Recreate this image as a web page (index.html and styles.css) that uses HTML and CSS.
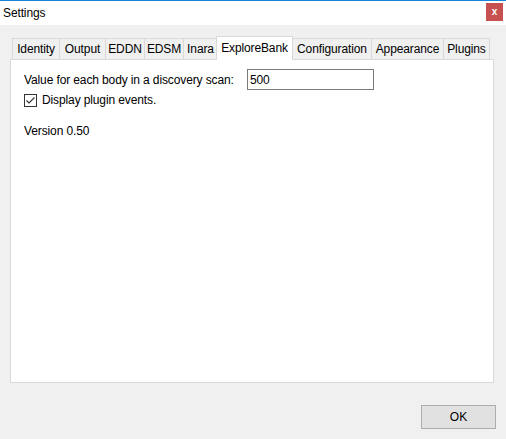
FILE: index.html
```html
<!DOCTYPE html>
<html>
<head>
<meta charset="utf-8">
<title>Settings</title>
<link rel="stylesheet" href="styles.css">
</head>
<body>
<div class="window">
  <div class="titlebar">
    <span class="title">Settings</span>
    <span class="close">x</span>
  </div>
  <div class="client">
    <div class="tabs">
      <div class="tab tab-identity">Identity</div>
      <div class="tab tab-output">Output</div>
      <div class="tab tab-eddn">EDDN</div>
      <div class="tab tab-edsm">EDSM</div>
      <div class="tab tab-inara">Inara</div>
      <div class="tab tab-explore active">ExploreBank</div>
      <div class="tab tab-config">Configuration</div>
      <div class="tab tab-appearance">Appearance</div>
      <div class="tab tab-plugins">Plugins</div>
    </div>
    <div class="panel">
      <div class="row-value">
        <label class="label" for="val">Value for each body in a discovery scan:</label>
        <input id="val" class="textbox" type="text" value="500">
      </div>
      <div class="check-row">
        <span class="checkbox">
          <svg width="11" height="11" viewBox="0 0 11 11"><path d="M1.5 5.5 L4 8 L9.5 2.5" fill="none" stroke="#333" stroke-width="1.1"/></svg>
        </span>
        <span class="check-label">Display plugin events.</span>
      </div>
      <div class="version">Version 0.50</div>
    </div>
    <div class="footer">
      <button class="btn">OK</button>
    </div>
  </div>
</div>
</body>
</html>
```
FILE: styles.css
```css
* { box-sizing: border-box; }
html, body { margin: 0; padding: 0; }
body {
  width: 506px;
  height: 439px;
  overflow: hidden;
  background: #f0f0f0;
  font-family: "Liberation Sans", Arial, sans-serif;
  font-size: 12px;
  letter-spacing: -0.12px;
  color: #000;
}
.window {
  height: 439px;
  border-top: 1px solid #1883d7;
  display: flex;
  flex-direction: column;
}
.titlebar {
  height: 24px;
  background: #fff;
  display: flex;
  justify-content: space-between;
  align-items: flex-start;
  padding-left: 3px;
}
.title { line-height: 24px; }
.close {
  width: 17px;
  height: 18px;
  margin-top: 2px;
  margin-right: 3px;
  background: #c75050;
  color: #fff;
  font-weight: bold;
  font-size: 10px;
  line-height: 17px;
  text-align: center;
}
.client {
  flex: 1;
  padding: 11px 10px 0 10px;
}
.tabs {
  display: flex;
  align-items: flex-end;
  height: 23px;
  margin-left: 2px;
}
.tab {
  height: 21px;
  border: 1px solid #d9d9d9;
  border-bottom: 0;
  margin-left: -1px;
  padding-top: 1px;
  line-height: 19px;
  text-align: center;
  white-space: nowrap;
  background: #f0f0f0;
}
.tab:first-child { margin-left: 0; }
.tab.active {
  height: 24px;
  margin-bottom: -1px;
  margin-left: -2px;
  background: #fff;
  position: relative;
  z-index: 1;
  line-height: 20px;
  padding-top: 1px;
}
.tab-identity { width: 48px; }
.tab-output { width: 47px; }
.tab-eddn { width: 40px; }
.tab-edsm { width: 40px; }
.tab-inara { width: 35px; }
.tab-explore { width: 77px; }
.tab-config { width: 80px; }
.tab-appearance { width: 73px; }
.tab-plugins { width: 47px; }
.panel {
  height: 324px;
  margin-right: 2px;
  background: #fff;
  border: 1px solid #d9d9d9;
  padding: 9px 0 0 13px;
}
.row-value {
  display: grid;
  grid-template-columns: 223px 127px;
  align-items: center;
}
.textbox {
  height: 21px;
  width: 127px;
  border: 1px solid #7a7a7a;
  padding: 0 2px;
  font-family: inherit;
  font-size: 12px;
  letter-spacing: -0.12px;
  color: #000;
  background: #fff;
  outline: none;
  margin: 0;
}
.check-row {
  margin-top: 4px;
  display: flex;
  align-items: center;
  gap: 5px;
  height: 13px;
}
.checkbox {
  width: 13px;
  height: 13px;
  border: 1px solid #333;
  background: #fff;
  display: flex;
  align-items: center;
  justify-content: center;
}
.checkbox svg { display: block; }
.check-label { line-height: 13px; }
.version {
  margin-top: 17px;
  line-height: 15px;
}
.footer {
  display: flex;
  justify-content: flex-end;
  margin-top: 22px;
}
.btn {
  width: 75px;
  height: 24px;
  background: #e1e1e1;
  border: 1px solid #adadad;
  font-family: inherit;
  font-size: 12px;
  color: #000;
  padding: 0;
  margin: 0;
}
```
